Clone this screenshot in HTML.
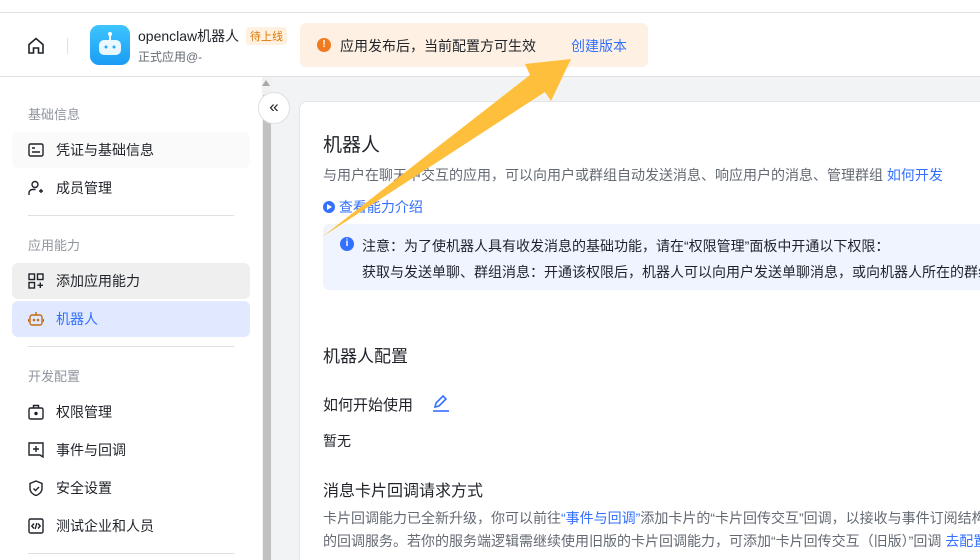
<!DOCTYPE html>
<html><head><meta charset="utf-8"><style>
*{margin:0;padding:0;box-sizing:border-box}
html,body{width:980px;height:560px;overflow:hidden}
body{background:#f2f3f5;font-family:"Liberation Sans","Noto Sans CJK SC",sans-serif;position:relative;color:#1f2329}
.abs{position:absolute}
.top{left:0;top:0;width:980px;height:77px;background:#fff;border-bottom:1px solid #dee0e3}
.top:before{content:"";position:absolute;left:0;top:12px;width:980px;height:1px;background:#dee0e3}
.side{left:0;top:77px;width:262px;height:483px;background:#fff}
.sb{left:262px;top:77px;width:10px;height:483px;background:#f1f1f1}
.sbt{left:263px;top:95px;width:8px;height:465px;background:#c1c1c1}
.sec{left:28px;font-size:13px;color:#8f959e}
.item{left:12px;width:238px;height:36px;border-radius:6px;font-size:14px;color:#1f2329;padding-left:44px;line-height:36px}
.ic{position:absolute;left:16px;top:10px}
.hr{left:28px;width:206px;height:1px;background:#dee0e3}
.card{left:299px;top:101px;width:700px;height:470px;background:#fff;border:1px solid #e4e5e7;border-radius:8px}
.t{font-size:14px}
</style></head><body>
<div class="abs top"></div>
<svg class="abs" style="left:26px;top:36px" width="20" height="20" viewBox="0 0 20 20" fill="none" stroke="#1f2329" stroke-width="1.6"><path d="M3 8.5L10 2.5l7 6V17H12.5v-5h-5v5H3z"/></svg>
<div class="abs" style="left:67px;top:38px;width:1px;height:16px;background:#dee0e3"></div>
<div class="abs" style="left:90px;top:25px;width:40px;height:40px;border-radius:9px;background:linear-gradient(#3ec5ff,#1a9cf4)"></div>
<svg class="abs" style="left:90px;top:25px" width="40" height="40"><rect x="9" y="15" width="22" height="15" rx="5" fill="#fff" opacity=".9"/><line x1="20" y1="9" x2="20" y2="15" stroke="#fff" stroke-width="2"/><circle cx="20" cy="9" r="2" fill="#fff"/><circle cx="16" cy="22" r="1.5" fill="#2aa8f8"/><circle cx="24" cy="22" r="1.5" fill="#2aa8f8"/></svg>
<div class="abs" style="left:138px;top:26px;font-size:14px">openclaw机器人</div>
<div class="abs" style="left:246px;top:27px;font-size:11px;color:#de7802;background:#fef1e1;padding:1px 4px;border-radius:3px">待上线</div>
<div class="abs" style="left:138px;top:48px;font-size:12px;color:#646a73">正式应用@-</div>
<div class="abs" style="left:300px;top:23px;width:348px;height:44px;background:#fef1e4;border-radius:6px"></div>
<div class="abs" style="left:317px;top:38px;width:14px;height:14px;border-radius:50%;background:#f17b20;color:#fff;font-size:10px;text-align:center;line-height:14px;font-weight:bold">!</div>
<div class="abs" style="left:340px;top:36px;font-size:14px">应用发布后，当前配置方可生效</div>
<div class="abs" style="left:571px;top:36px;font-size:14px;color:#3370ff">创建版本</div>

<div class="abs side"></div>
<div class="abs sb"></div><div class="abs sbt"></div>
<div class="abs" style="left:262px;top:80px;width:0;height:0;border:4px solid transparent;border-bottom:6px solid #a8a8a8;border-top:0"></div>
<div class="abs sec" style="top:104px">基础信息</div>
<div class="abs item" style="top:132px;background:#fafafa">凭证与基础信息<svg class="ic" width="16" height="16" fill="none" stroke="#1f2329" stroke-width="1.4"><rect x="1" y="2" width="14" height="12" rx="1.5"/><path d="M4 6h3M4 10h8"/></svg></div>
<div class="abs item" style="top:170px">成员管理<svg class="ic" width="16" height="16" fill="none" stroke="#1f2329" stroke-width="1.4"><circle cx="7" cy="4.5" r="3"/><path d="M1 15v-2a3.5 3.5 0 0 1 3.5-3.5h3M11 11h4M13 9v4"/></svg></div>
<div class="abs hr" style="top:215px"></div>
<div class="abs sec" style="top:235px">应用能力</div>
<div class="abs item" style="top:263px;background:#efefef">添加应用能力<svg class="ic" width="16" height="16" fill="none" stroke="#1f2329" stroke-width="1.4"><rect x="1" y="1" width="5.5" height="5.5"/><rect x="9.5" y="1" width="5.5" height="5.5"/><rect x="1" y="9.5" width="5.5" height="5.5"/><path d="M9.5 12.3h5.5M12.3 9.5v5.5"/></svg></div>
<div class="abs item" style="top:301px;background:#e0e9ff;color:#3370ff">机器人<svg class="ic" width="16" height="16" fill="none" stroke="#c56a16" stroke-width="1.4"><rect x="2" y="4" width="12" height="10" rx="2"/><path d="M8 1v3M0.5 8v3M15.5 8v3"/><circle cx="6" cy="9" r=".6" fill="#c56a16"/><circle cx="10" cy="9" r=".6" fill="#c56a16"/></svg></div>
<div class="abs hr" style="top:346px"></div>
<div class="abs sec" style="top:366px">开发配置</div>
<div class="abs item" style="top:394px">权限管理<svg class="ic" width="16" height="16" fill="none" stroke="#1f2329" stroke-width="1.4"><rect x="1" y="4" width="14" height="11" rx="1.5"/><path d="M5.5 4V1.5h5V4"/><circle cx="8" cy="9.5" r="1" fill="#1f2329"/></svg></div>
<div class="abs item" style="top:432px">事件与回调<svg class="ic" width="16" height="16" fill="none" stroke="#1f2329" stroke-width="1.4"><path d="M1 1h14v14l-3-2H1z"/><path d="M5 7h6M8 4v6"/></svg></div>
<div class="abs item" style="top:470px">安全设置<svg class="ic" width="16" height="16" fill="none" stroke="#1f2329" stroke-width="1.4"><path d="M8 1l6 2.5v5c0 3.5-3 6-6 7-3-1-6-3.5-6-7v-5z"/><path d="M5.5 8.5l2 2 3.5-3.5"/></svg></div>
<div class="abs item" style="top:508px">测试企业和人员<svg class="ic" width="16" height="16" fill="none" stroke="#1f2329" stroke-width="1.4"><rect x="1" y="1" width="14" height="14" rx="1.5"/><path d="M6 5.5L3.8 8 6 10.5M10 5.5l2.2 2.5L10 10.5M8.8 5l-1.6 6"/></svg></div>
<div class="abs hr" style="top:553px"></div>

<div class="abs" style="left:258px;top:92px;width:32px;height:32px;border-radius:50%;background:#fff;border:1px solid #dee0e3;text-align:center;line-height:28px;font-size:17px;color:#1f2329">«</div>

<div class="abs card"></div>
<div class="abs" style="left:323px;top:130px;font-size:19px">机器人</div>
<div class="abs t" style="left:323px;top:165px;color:#646a73">与用户在聊天中交互的应用，可以向用户或群组自动发送消息、响应用户的消息、管理群组 <span style="color:#3370ff">如何开发</span></div>
<div class="abs t" style="left:323px;top:197px;color:#3370ff">
<span style="display:inline-block;width:12px;height:12px;border-radius:50%;background:#3370ff;vertical-align:-1px;position:relative"><span style="position:absolute;left:4px;top:3px;border:3px solid transparent;border-left:5px solid #fff;border-right:0"></span></span> 查看能力介绍</div>
<div class="abs" style="left:323px;top:224px;width:680px;height:66px;background:#f0f4ff;border-radius:6px"></div>
<div class="abs" style="left:340px;top:237px;width:14px;height:14px;border-radius:50%;background:#3370ff;color:#fff;font-size:10px;text-align:center;line-height:14px;font-weight:bold">i</div>
<div class="abs t" style="left:362px;top:236px">注意：为了使机器人具有收发消息的基础功能，请在“权限管理”面板中开通以下权限：</div>
<div class="abs t" style="left:362px;top:262px;white-space:nowrap">获取与发送单聊、群组消息：开通该权限后，机器人可以向用户发送单聊消息，或向机器人所在的群组</div>
<div class="abs" style="left:323px;top:342px;font-size:17px">机器人配置</div>
<div class="abs" style="left:323px;top:394px;font-size:15px">如何开始使用</div>
<svg class="abs" style="left:431px;top:393px" width="20" height="20" fill="none" stroke="#3370ff" stroke-width="1.6"><path d="M4 14l1-4 7-7 3 3-7 7z"/><path d="M2 18h16"/></svg>
<div class="abs t" style="left:323px;top:431px">暂无</div>
<div class="abs" style="left:323px;top:477px;font-size:16px">消息卡片回调请求方式</div>
<div class="abs t" style="left:323px;top:508px;color:#646a73;white-space:nowrap">卡片回调能力已全新升级，你可以前往<span style="color:#3370ff">“事件与回调”</span>添加卡片的“卡片回传交互”回调，以接收与事件订阅结构</div>
<div class="abs t" style="left:323px;top:531px;color:#646a73;white-space:nowrap">的回调服务。若你的服务端逻辑需继续使用旧版的卡片回调能力，可添加“卡片回传交互（旧版）”回调 <span style="color:#3370ff">去配置</span></div>

<svg class="abs" style="left:0;top:0" width="980" height="560"><path d="M322 237 L530 75 L525 64 L571 59 L551 101 L545 92 Z" fill="#fdbf3c"/></svg>
</body></html>
